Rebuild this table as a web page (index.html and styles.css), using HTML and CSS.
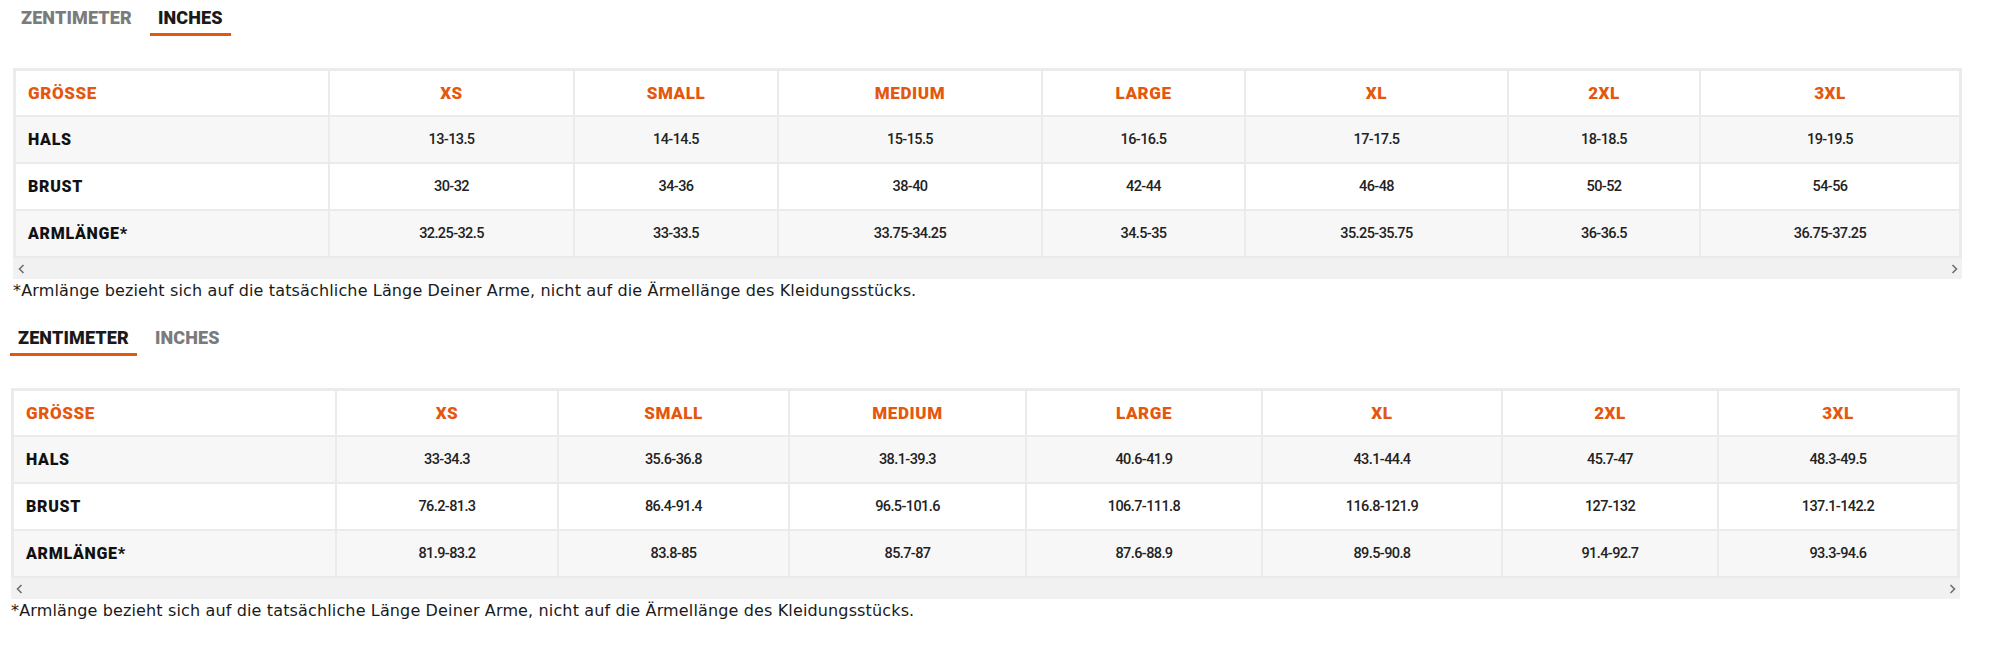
FILE: index.html
```html
<!DOCTYPE html>
<html lang="de">
<head>
<meta charset="utf-8">
<title>Größentabelle</title>
<link rel="stylesheet" href="styles.css">
</head>
<body>
<div class="page">
  <section class="chart chart--in">
    <div class="tabs">
      <span class="tab">ZENTIMETER</span>
      <span class="tab tab--active">INCHES</span>
    </div>
    <div class="table-wrap">
      <table class="size-table">
        <colgroup>
          <col class="in-c1"><col class="in-c2"><col class="in-c3"><col class="in-c4"><col class="in-c5"><col class="in-c6"><col class="in-c7"><col class="in-c8">
        </colgroup>
        <thead>
          <tr><th>GRÖSSE</th><th>XS</th><th>SMALL</th><th>MEDIUM</th><th>LARGE</th><th>XL</th><th>2XL</th><th>3XL</th></tr>
        </thead>
        <tbody>
          <tr class="row-alt"><th>HALS</th><td>13-13.5</td><td>14-14.5</td><td>15-15.5</td><td>16-16.5</td><td>17-17.5</td><td>18-18.5</td><td>19-19.5</td></tr>
          <tr><th>BRUST</th><td>30-32</td><td>34-36</td><td>38-40</td><td>42-44</td><td>46-48</td><td>50-52</td><td>54-56</td></tr>
          <tr class="row-alt"><th>ARMLÄNGE*</th><td>32.25-32.5</td><td>33-33.5</td><td>33.75-34.25</td><td>34.5-35</td><td>35.25-35.75</td><td>36-36.5</td><td>36.75-37.25</td></tr>
        </tbody>
      </table>
      <div class="scrollbar">
        <svg class="arrow" width="7" height="10" viewBox="0 0 7 10"><polyline points="5.5,1 1.5,5 5.5,9" fill="none" stroke="#6f6f6f" stroke-width="1.6"/></svg>
        <svg class="arrow" width="7" height="10" viewBox="0 0 7 10"><polyline points="1.5,1 5.5,5 1.5,9" fill="none" stroke="#6f6f6f" stroke-width="1.6"/></svg>
      </div>
    </div>
    <p class="note">*Armlänge bezieht sich auf die tatsächliche Länge Deiner Arme, nicht auf die Ärmellänge des Kleidungsstücks.</p>
  </section>

  <section class="chart chart--cm">
    <div class="tabs">
      <span class="tab tab--active">ZENTIMETER</span>
      <span class="tab">INCHES</span>
    </div>
    <div class="table-wrap">
      <table class="size-table size-table--cm">
        <colgroup>
          <col class="cm-c1"><col class="cm-c2"><col class="cm-c3"><col class="cm-c4"><col class="cm-c5"><col class="cm-c6"><col class="cm-c7"><col class="cm-c8">
        </colgroup>
        <thead>
          <tr><th>GRÖSSE</th><th>XS</th><th>SMALL</th><th>MEDIUM</th><th>LARGE</th><th>XL</th><th>2XL</th><th>3XL</th></tr>
        </thead>
        <tbody>
          <tr class="row-alt"><th>HALS</th><td>33-34.3</td><td>35.6-36.8</td><td>38.1-39.3</td><td>40.6-41.9</td><td>43.1-44.4</td><td>45.7-47</td><td>48.3-49.5</td></tr>
          <tr><th>BRUST</th><td>76.2-81.3</td><td>86.4-91.4</td><td>96.5-101.6</td><td>106.7-111.8</td><td>116.8-121.9</td><td>127-132</td><td>137.1-142.2</td></tr>
          <tr class="row-alt"><th>ARMLÄNGE*</th><td>81.9-83.2</td><td>83.8-85</td><td>85.7-87</td><td>87.6-88.9</td><td>89.5-90.8</td><td>91.4-92.7</td><td>93.3-94.6</td></tr>
        </tbody>
      </table>
      <div class="scrollbar">
        <svg class="arrow" width="7" height="10" viewBox="0 0 7 10"><polyline points="5.5,1 1.5,5 5.5,9" fill="none" stroke="#6f6f6f" stroke-width="1.6"/></svg>
        <svg class="arrow" width="7" height="10" viewBox="0 0 7 10"><polyline points="1.5,1 5.5,5 1.5,9" fill="none" stroke="#6f6f6f" stroke-width="1.6"/></svg>
      </div>
    </div>
    <p class="note">*Armlänge bezieht sich auf die tatsächliche Länge Deiner Arme, nicht auf die Ärmellänge des Kleidungsstücks.</p>
  </section>
</div>
</body>
</html>
```

FILE: styles.css
```css
* { box-sizing: border-box; }

html, body {
  margin: 0;
  padding: 0;
  background: #ffffff;
}

body {
  font-family: Roboto, "Liberation Sans", sans-serif;
  color: #1c1c1c;
}

.page {
  width: 2000px;
}

.chart {
  display: flex;
  flex-direction: column;
}

.chart--in {
  padding-left: 13px;
  width: 1962px;
}

.chart--cm {
  margin-top: 17px;
  padding-left: 11px;
  width: 1960px;
}

.chart--cm .tabs {
  margin-left: -1px;
}

/* Tabs */
.tabs {
  display: flex;
  gap: 10px;
}

.tab {
  font-family: Roboto, "Liberation Sans", sans-serif;
  font-weight: 900;
  font-size: 18px;
  line-height: 24px;
  letter-spacing: 0.15px;
  padding: 6px 8px 3px;
  border-bottom: 3px solid transparent;
  color: #7b7b7b;
}

.tab--active {
  color: #1a1a1a;
  border-bottom-color: #e4570e;
}

/* Table */
.table-wrap {
  margin-top: 32px;
  display: flex;
  flex-direction: column;
}

.size-table {
  width: 1949px;
  table-layout: fixed;
  border-collapse: separate;
  border-spacing: 0;
  border: 3px solid #ebebeb;
  border-bottom-width: 2px;
}

.in-c1 { width: 314px; }
.in-c2 { width: 245px; }
.in-c3 { width: 204px; }
.in-c4 { width: 264px; }
.in-c5 { width: 203px; }
.in-c6 { width: 263px; }
.in-c7 { width: 192px; }
.in-c8 { width: 258px; }

.cm-c1 { width: 323px; }
.cm-c2 { width: 222px; }
.cm-c3 { width: 231px; }
.cm-c4 { width: 237px; }
.cm-c5 { width: 236px; }
.cm-c6 { width: 240px; }
.cm-c7 { width: 216px; }
.cm-c8 { width: 238px; }

.size-table th,
.size-table td {
  padding: 0 12px;
  border-right: 2px solid #ebebeb;
  border-bottom: 2px solid #ebebeb;
  text-align: center;
  vertical-align: middle;
  white-space: nowrap;
}

.size-table tr > :last-child {
  border-right: 0;
}

.size-table tbody tr:last-child > * {
  border-bottom: 0;
}

.size-table thead th {
  height: 46px;
  font-weight: 900;
  font-size: 17px;
  letter-spacing: 0.6px;
  color: #e4570e;
  background: #ffffff;
}

.size-table thead th:first-child {
  text-align: left;
}

.size-table tbody th {
  text-align: left;
  font-weight: 900;
  font-size: 16px;
  letter-spacing: 0.7px;
  color: #111111;
}

.size-table tbody tr > * {
  height: 47px;
}

.size-table tbody tr:last-child > * {
  height: 45px;
}

.size-table td {
  font-size: 14.5px;
  font-weight: 500;
  letter-spacing: -0.6px;
  color: #222222;
}

.row-alt > * {
  background: #f7f7f7;
}

.scrollbar {
  width: 1949px;
  height: 21px;
  background: #f1f1f1;
  display: flex;
  align-items: center;
  justify-content: space-between;
  padding: 0 4px 0 5px;
}

.arrow {
  display: block;
}

.note {
  margin: 0;
  font-family: "DejaVu Sans", "Open Sans", sans-serif;
  font-size: 16px;
  line-height: 24px;
  letter-spacing: 0.14px;
  color: #1a1a1a;
}
```
